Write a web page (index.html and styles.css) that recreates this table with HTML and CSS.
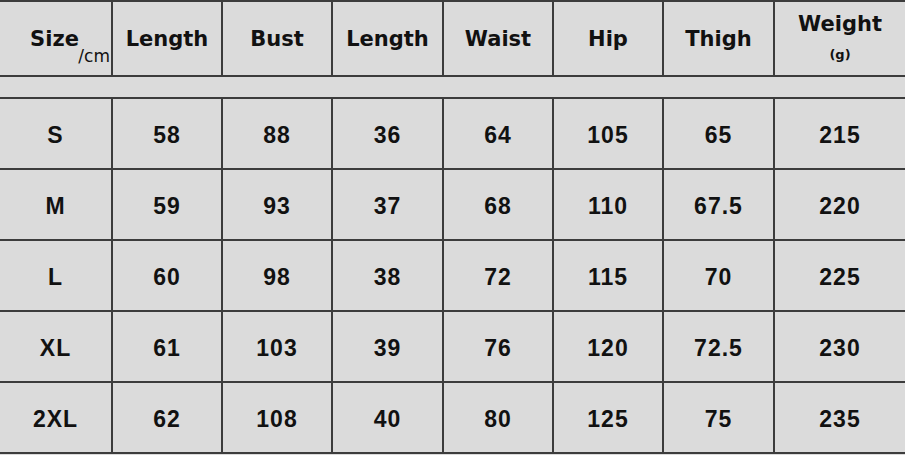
FILE: index.html
```html
<!DOCTYPE html>
<html>
<head>
<meta charset="utf-8">
<link rel="stylesheet" href="styles.css">
</head>
<body>
<div class="table">
  <div class="cell head size"><span class="size-label">Size</span><span class="unit">/cm</span></div>
  <div class="cell head">Length</div>
  <div class="cell head">Bust</div>
  <div class="cell head">Length</div>
  <div class="cell head">Waist</div>
  <div class="cell head">Hip</div>
  <div class="cell head">Thigh</div>
  <div class="cell head last weight"><span>Weight</span><span class="gram">(g)</span></div>

  <div class="spacer"></div>

  <div class="cell">S</div><div class="cell">58</div><div class="cell">88</div><div class="cell">36</div><div class="cell">64</div><div class="cell">105</div><div class="cell">65</div><div class="cell last">215</div>
  <div class="cell">M</div><div class="cell">59</div><div class="cell">93</div><div class="cell">37</div><div class="cell">68</div><div class="cell">110</div><div class="cell">67.5</div><div class="cell last">220</div>
  <div class="cell">L</div><div class="cell">60</div><div class="cell">98</div><div class="cell">38</div><div class="cell">72</div><div class="cell">115</div><div class="cell">70</div><div class="cell last">225</div>
  <div class="cell">XL</div><div class="cell">61</div><div class="cell">103</div><div class="cell">39</div><div class="cell">76</div><div class="cell">120</div><div class="cell">72.5</div><div class="cell last">230</div>
  <div class="cell">2XL</div><div class="cell">62</div><div class="cell">108</div><div class="cell">40</div><div class="cell">80</div><div class="cell">125</div><div class="cell">75</div><div class="cell last">235</div>
</div>
</body>
</html>
```

FILE: styles.css
```css
html, body {
  margin: 0;
  padding: 0;
  background: #dbdbdb;
}
body {
  width: 905px;
  height: 455px;
  overflow: hidden;
}
.table {
  display: grid;
  grid-template-columns: 113px 110px 110px 111px 110px 110px 111px 130px;
  grid-template-rows: 75px 22px repeat(5, 71px);
  border-top: 2px solid #3c3c3c;
}
.cell {
  box-sizing: border-box;
  display: flex;
  align-items: center;
  justify-content: center;
  border-right: 2px solid #3c3c3c;
  border-bottom: 2px solid #3c3c3c;
  font-family: "Liberation Sans", Arial, sans-serif;
  font-weight: bold;
  font-size: 23px;
  letter-spacing: 1px;
  color: #111;
  padding-top: 3px;
}
.cell.last {
  border-right: none;
}
.head {
  font-family: "DejaVu Sans", sans-serif;
  font-size: 21px;
  letter-spacing: 0;
  padding-top: 0;
}
.size {
  position: relative;
}
.size-label {
  margin-left: -2px;
}
.unit {
  position: absolute;
  right: 1px;
  bottom: 9px;
  font-family: "DejaVu Sans", sans-serif;
  font-weight: normal;
  font-size: 17px;
  color: #111;
}
.weight {
  flex-direction: column;
  justify-content: flex-start;
  padding-top: 10px;
}
.gram {
  font-size: 13px;
  margin-top: 11px;
}
.spacer {
  grid-column: 1 / -1;
  box-sizing: border-box;
  border-bottom: 2px solid #3c3c3c;
}
```
